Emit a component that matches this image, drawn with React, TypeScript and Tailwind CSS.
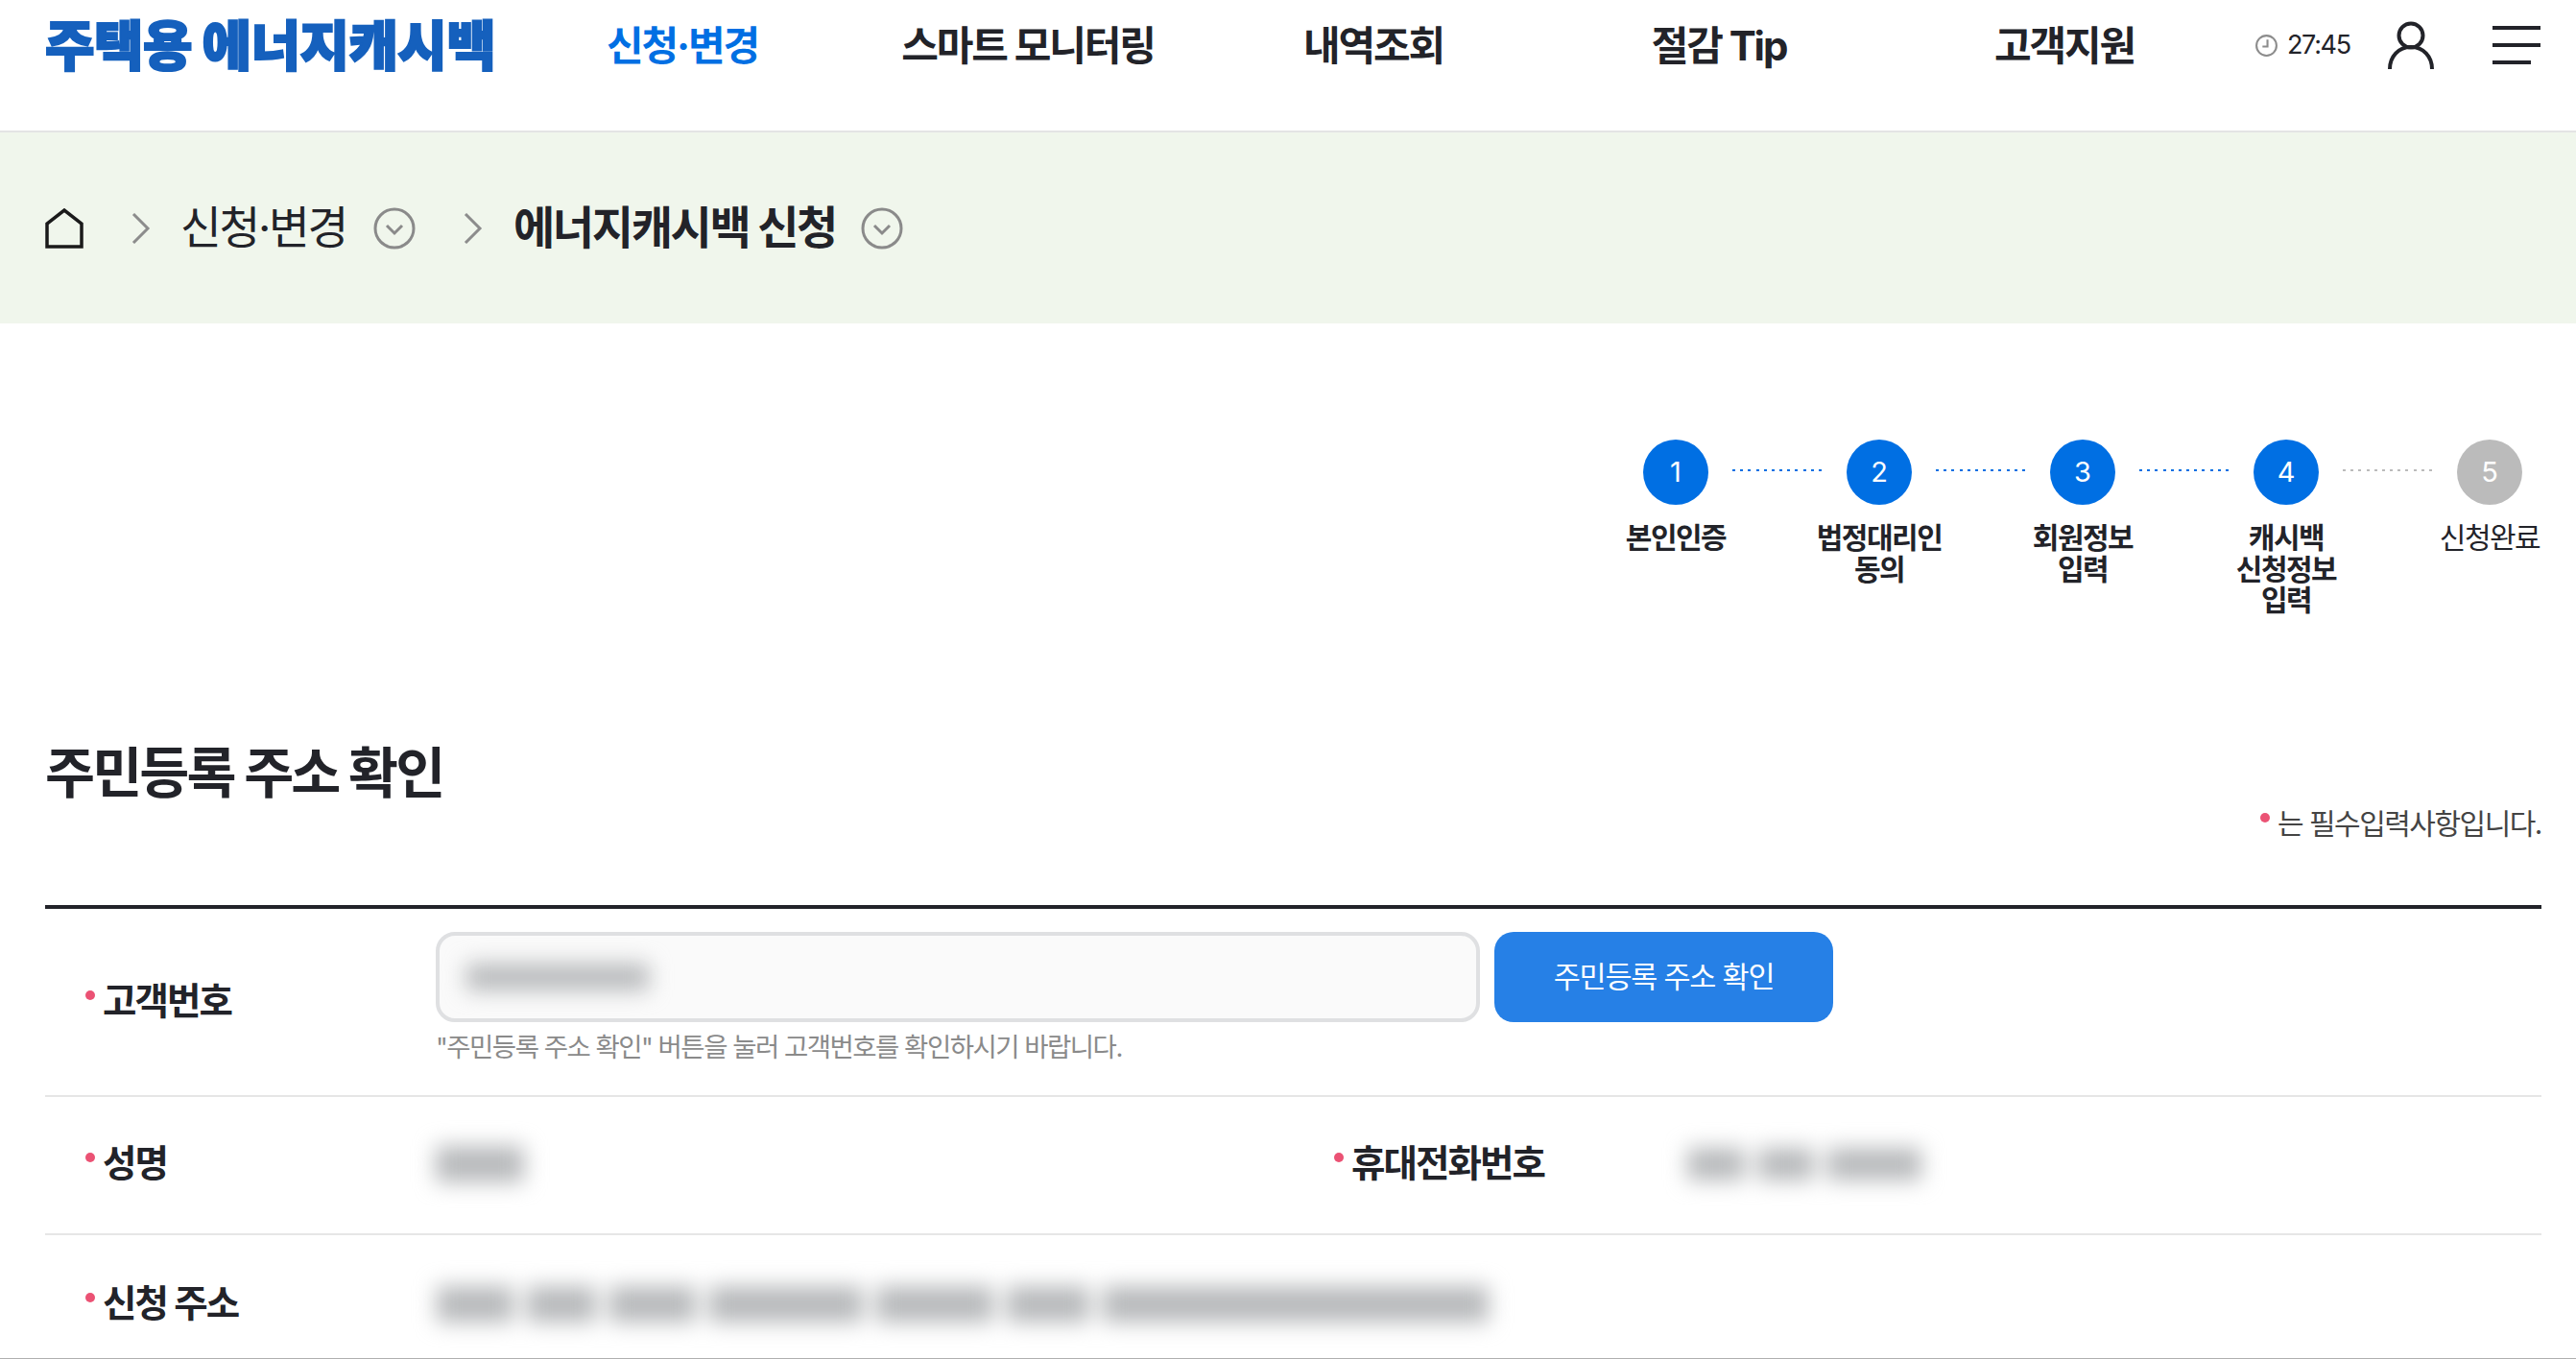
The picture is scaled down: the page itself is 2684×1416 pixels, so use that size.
import React from "react";

const FONT = "font-['Inter','Noto_Sans_CJK_KR','Noto_Sans',sans-serif]";

const navItems = ["신청·변경", "스마트 모니터링", "내역조회", "절감 Tip", "고객지원"];

const steps = [
  { no: 1, label: ["본인인증"] },
  { no: 2, label: ["법정대리인", "동의"] },
  { no: 3, label: ["회원정보", "입력"] },
  { no: 4, label: ["캐시백", "신청정보", "입력"] },
  { no: 5, label: ["신청완료"], off: true },
];

function Chevron() {
  return (
    <svg width="20" height="32" viewBox="0 0 20 32" fill="none" stroke="#8c8c8c" strokeWidth="3">
      <path d="M2 1l15 15L2 31" />
    </svg>
  );
}

function CircleDown() {
  return (
    <svg width="44" height="44" viewBox="0 0 44 44" fill="none" stroke="#8a8a8a" strokeWidth="3">
      <circle cx="22" cy="22" r="20" />
      <path d="M14 19l8 8 8-8" />
    </svg>
  );
}

function Required() {
  return <span className="mb-[14px] mr-[8px] h-[10px] w-[10px] rounded-full bg-[#eb5274]" />;
}

function Label({ children, className }: { children: string; className?: string }) {
  return (
    <div className={"flex items-center text-[38.5px] font-bold tracking-[-0.05em] text-[#222329] " + (className ?? "")}>
      <Required />
      {children}
    </div>
  );
}

// blurred personal data in the screenshot, one lump per word
function Blur({ parts, h = 30 }: { parts: number[]; h?: number }) {
  return (
    <div className="flex gap-[14px] blur-[11px]">
      {parts.map((w, i) => (
        <div key={i} className="bg-[#b8babc]" style={{ width: w, height: h }} />
      ))}
    </div>
  );
}

function Stepper() {
  return (
    <div className="flex flex-col items-end pr-[36px] pt-[121px]">
      <div className="flex items-center pr-[20px]">
        {steps.map((s, i) => (
          <div key={s.no} className="flex items-center">
            <div
              className={
                "flex h-[68px] w-[68px] items-center justify-center rounded-full text-[29px] text-white " +
                (s.off ? "bg-[#bbbbbb]" : "bg-[#006fe3]")
              }
            >
              {s.no}
            </div>
            {i < 4 && (
              <div className="mb-[4px] ml-[25px] mr-[26px] flex w-[93px] justify-between">
                {Array.from({ length: 12 }).map((_, d) => (
                  <span key={d} className={"h-[2px] w-[3px] " + (i === 3 ? "bg-[#bbbbbb]" : "bg-[#006fe3]")} />
                ))}
              </div>
            )}
          </div>
        ))}
      </div>
      <div className="-mr-[12px] mt-[18px] flex gap-[80px]">
        {steps.map((s) => (
          <div
            key={s.no}
            className={
              "w-[132px] text-center text-[30px] leading-[32.5px] tracking-[-0.05em] text-[#222329] " +
              (s.off ? "font-normal" : "font-bold")
            }
          >
            {s.label.map((l) => (
              <div key={l}>{l}</div>
            ))}
          </div>
        ))}
      </div>
    </div>
  );
}

export default function App() {
  return (
    <div className={"h-[1416px] w-[2684px] overflow-hidden bg-white " + FONT}>
      <header className="flex h-[138px] items-start border-b-2 border-[#e4e4e4] pl-[47px]">
        <div className="flex h-[96px] w-[484px] items-center whitespace-nowrap text-[56px] font-black tracking-[-0.01em] text-[#1560bd] [-webkit-text-stroke:2px_#1560bd]">
          주택용 에너지캐시백
        </div>
        <nav className="grid h-[95px] w-[1800px] grid-cols-5 items-center text-center text-[42px] font-bold tracking-[-0.05em] text-[#222329]">
          {navItems.map((n, i) => (
            <a key={n} className={i === 0 ? "text-[#006fe3]" : ""}>
              {n}
            </a>
          ))}
        </nav>
        <div className="flex h-[94px] items-center pl-[18px]">
          <svg width="25" height="25" viewBox="0 0 24 24" fill="none" stroke="#8c8c8c" strokeWidth="2">
            <circle cx="12" cy="12" r="10" />
            <path d="M13 6v7H8" />
          </svg>
          <span className="ml-[9px] text-[27px] tracking-[-0.05em] text-[#222329]">27:45</span>
          <svg className="ml-[38px]" width="50" height="50" viewBox="0 0 50 50" fill="none" stroke="#222329" strokeWidth="4">
            <circle cx="25" cy="15" r="12.5" />
            <path d="M3 50c0-13 9-23 22-23s22 10 22 23" />
          </svg>
          <div className="ml-[60px] flex w-[50px] flex-col gap-[14px]">
            <span className="h-[4px] w-[50px] bg-[#222329]" />
            <span className="h-[4px] w-[50px] bg-[#222329]" />
            <span className="h-[4px] w-[40px] bg-[#222329]" />
          </div>
        </div>
      </header>

      <div className="flex h-[199px] items-center bg-[#f0f6ec] pl-[47px] text-[46.5px] tracking-[-0.05em] text-[#222329]">
        <svg width="40" height="42" viewBox="0 0 40 42" fill="none" stroke="#1a1a1a" strokeWidth="3.5">
          <path d="M2 40V16L20 2l18 14v24z" />
        </svg>
        <span className="ml-[50px] mr-[31px]">
          <Chevron />
        </span>
        <span>신청·변경</span>
        <span className="ml-[28px] mr-[50px]">
          <CircleDown />
        </span>
        <Chevron />
        <span className="ml-[32px] text-[47px] font-bold">에너지캐시백 신청</span>
        <span className="ml-[26px]">
          <CircleDown />
        </span>
      </div>

      <Stepper />

      <main className="pl-[47px] pr-[36px]">
        <div className="flex items-end justify-between">
          <h1 className="mb-[37px] mt-[122px] text-[56.5px] font-bold tracking-[-0.05em] text-[#222329]">주민등록 주소 확인</h1>
          <p className="mb-[4px] flex items-center text-[30px] tracking-[-0.05em] text-[#444]">
            <Required />는 필수입력사항입니다.
          </p>
        </div>

        <div className="mt-[58px] border-t-4 border-[#222329]">
          <div className="flex h-[196px] border-b-2 border-[#e6e6e6] pl-[42px]">
            <Label className="mt-[56px] h-[82px] w-[365px]">고객번호</Label>
            <div className="pt-[24px]">
              <div className="flex gap-[15px]">
                <div className="flex h-[94px] w-[1088px] items-center rounded-[20px] border-4 border-[#dfe0e2] bg-[#fafafa] pl-[28px]">
                  <Blur parts={[190]} h={28} />
                </div>
                <button className="h-[94px] w-[353px] rounded-[20px] bg-[#2680e6] text-[30.5px] tracking-[-0.04em] text-white">
                  주민등록 주소 확인
                </button>
              </div>
              <p className="mt-[6px] text-[27.5px] tracking-[-0.055em] text-[#8a8a8a]">
                "주민등록 주소 확인" 버튼을 눌러 고객번호를 확인하시기 바랍니다.
              </p>
            </div>
          </div>

          <div className="flex h-[144px] items-center border-b-2 border-[#e6e6e6] pb-[2px] pl-[42px]">
            <Label className="w-[365px]">성명</Label>
            <div className="w-[936px]">
              <Blur parts={[92]} h={38} />
            </div>
            <Label className="w-[368px]">휴대전화번호</Label>
            <Blur parts={[60, 58, 98]} h={34} />
          </div>

          <div className="flex h-[128px] items-center pl-[42px] pt-[15px]">
            <Label className="w-[366px]">신청 주소</Label>
            <Blur parts={[80, 72, 90, 160, 122, 86, 402]} h={38} />
          </div>
        </div>
      </main>
      <div className="h-[2px] w-full bg-[#b0b0b0]" />
    </div>
  );
}
